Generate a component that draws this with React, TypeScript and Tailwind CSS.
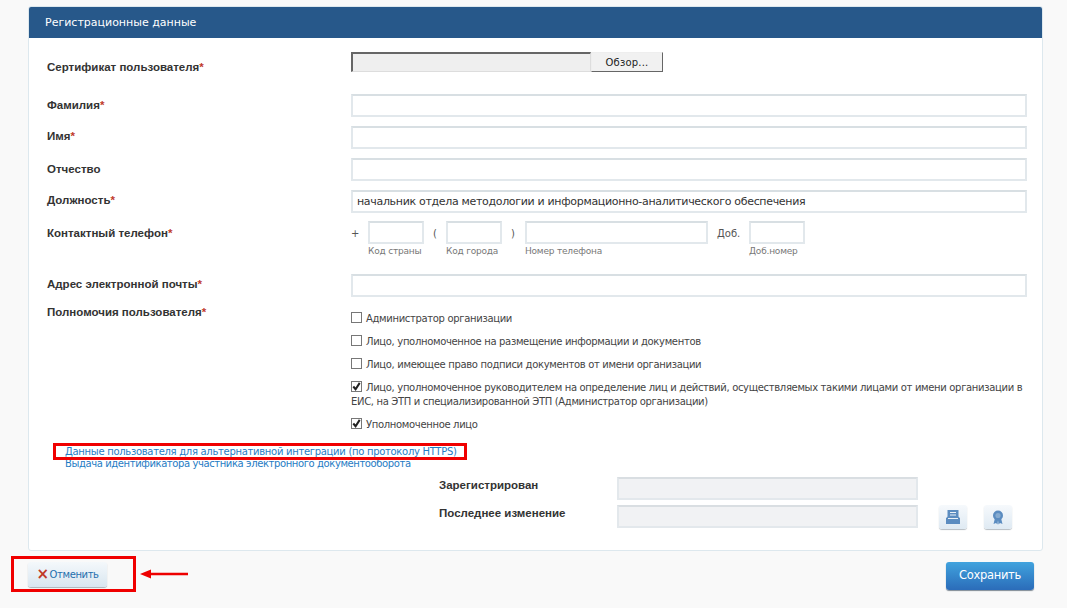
import React from 'react';

const Req = () => <span className="text-[#c0392b]">*</span>;

const TextField = ({ value = '' }: { value?: string }) => (
  <div className="h-[23px] w-full border-2 border-[#e2e8ec] border-t-[#d8dfe3] bg-white px-[4px] text-[11px] leading-[19px] tracking-[-0.32px] text-[#333]">{value}</div>
);

const Row = ({ label, className, labelClass, children }: { label: React.ReactNode; className: string; labelClass: string; children?: React.ReactNode }) => (
  <div className={`grid grid-cols-[304px_676px] ${className}`}>
    <div className={`font-['Liberation_Sans',sans-serif] text-[11.5px] font-bold leading-[14px] text-[#333] ${labelClass}`}>{label}</div>
    <div>{children}</div>
  </div>
);

const PhoneBox = ({ w, hint }: { w: string; hint: string }) => (
  <div className={w}>
    <div className="h-[23px] border-2 border-[#e2e8ec] border-t-[#d8dfe3] bg-white" />
    <div className="mt-[1px] whitespace-nowrap text-[9px] leading-[12px] tracking-[-0.2px] text-[#777]">{hint}</div>
  </div>
);

const Check = ({ checked, children, className }: { checked?: boolean; children: React.ReactNode; className: string }) => (
  <div className={`text-[10px] leading-[14px] tracking-[-0.33px] text-[#444] ${className}`}>
    <span className="relative mr-[4px] inline-block h-[11px] w-[11px] translate-y-[1px] border border-[#777] bg-white">
      {checked && (
        <svg viewBox="0 0 12 12" className="absolute -top-px -left-px h-[11px] w-[11px]">
          <path d="M2.500 6l2.500 3 4.500-7" fill="none" stroke="#222" strokeWidth="2.200" />
        </svg>
      )}
    </span>
    {children}
  </div>
);

const IconBtn = ({ children }: { children: React.ReactNode }) => (
  <div className="flex h-[24px] w-[28px] items-center justify-center rounded-[3px] bg-gradient-to-b from-[#f6f9fc] to-[#dfeaf3] shadow-[0_1px_1px_#b5bcc2]">
    {children}
  </div>
);

export default function App() {
  return (
    <div className="relative h-[608px] w-[1067px] overflow-hidden bg-[#f9f9f9] pt-[6px] font-['DejaVu_Sans',sans-serif]">
      <div className="mx-[28px] h-[545px] w-[1015px] overflow-hidden rounded-[3px] border border-[#dde8ee] bg-white">
        <div className="h-[31px] bg-[#27588a] pl-[16px] text-[11px] leading-[31px] text-white">Регистрационные данные</div>

        <div className="pl-[18px]">
          <Row label={<>Сертификат пользователя<Req /></>} className="h-[56px] pt-[14px]" labelClass="pt-[8px]">
            <div className="flex h-[20px]">
              <div className="h-[20px] w-[240px] border-t-2 border-r border-b border-l-2 border-t-[#666] border-r-[#ddd] border-b-[#ddd] border-l-[#666] bg-[#efefef]" />
              <div className="flex h-[20px] w-[72px] items-center justify-center border border-t-[#eee] border-r-[#666] border-b-[#666] border-l-[#eee] bg-[#f1f1f1] text-[10px] tracking-[0.2px] text-[#222]">Обзор...</div>
            </div>
          </Row>
          <Row label={<>Фамилия<Req /></>} className="h-[32px]" labelClass="pt-[4px]"><TextField /></Row>
          <Row label={<>Имя<Req /></>} className="h-[32px]" labelClass="pt-[3px]"><TextField /></Row>
          <Row label="Отчество" className="h-[32px]" labelClass="pt-[4px]"><TextField /></Row>
          <Row label={<>Должность<Req /></>} className="h-[31px]" labelClass="pt-[3px]">
            <TextField value="начальник отдела методологии и информационно-аналитического обеспечения" />
          </Row>
          <Row label={<>Контактный телефон<Req /></>} className="h-[54px]" labelClass="pt-[5px]">
            <div className="flex items-start text-[10px] leading-[25px] text-[#555]">
              <span className="w-[17px]">+</span>
              <PhoneBox w="w-[56px]" hint="Код страны" />
              <span className="ml-[9px] w-[13px]">(</span>
              <PhoneBox w="w-[56px]" hint="Код города" />
              <span className="ml-[9px] w-[14px]">)</span>
              <PhoneBox w="w-[183px]" hint="Номер телефона" />
              <span className="ml-[9px] w-[32px]">Доб.</span>
              <PhoneBox w="w-[56px]" hint="Доб.номер" />
            </div>
          </Row>
          <Row label={<>Адрес электронной почты<Req /></>} className="-mt-[1px] h-[30px]" labelClass="pt-[3px]"><TextField /></Row>
          <Row label={<>Полномочия пользователя<Req /></>} className="h-[142px]" labelClass="pt-[1px]">
            <Check className="pt-[7px]">Администратор организации</Check>
            <Check className="mt-[8px]">Лицо, уполномоченное на размещение информации и документов</Check>
            <Check className="mt-[8px]">Лицо, имеющее право подписи документов от имени организации</Check>
            <Check checked className="mt-[8px]">
              Лицо, уполномоченное руководителем на определение лиц и действий, осуществляемых такими лицами от имени организации в ЕИС, на ЭТП и специализированной ЭТП (Администратор организации)
            </Check>
            <Check checked className="mt-[8px]">Уполномоченное лицо</Check>
          </Row>

          <div className="pl-[18px] text-[10px] leading-[12px] tracking-[-0.3px] text-[#1f7cc4]">
            <div>Данные пользователя для альтернативной интеграции (по протоколу HTTPS)</div>
            <div className="tracking-[-0.4px]">Выдача идентификатора участника электронного документооборота</div>
          </div>

          <div className="mt-[7px] ml-[392px] w-[578px]">
            <div className="flex h-[28px] items-start">
              <div className="w-[178px] pt-[1px] font-['Liberation_Sans',sans-serif] text-[11.5px] leading-[14px] font-bold text-[#333]">Зарегистрирован</div>
              <div className="h-[23px] w-[301px] border-2 border-[#e3e8ec] border-t-[#d9dee2] bg-[#f1f2f4]" />
            </div>
            <div className="flex h-[28px] items-start">
              <div className="w-[178px] pt-[1px] font-['Liberation_Sans',sans-serif] text-[11.5px] leading-[14px] font-bold text-[#333]">Последнее изменение</div>
              <div className="h-[23px] w-[301px] border-2 border-[#e3e8ec] border-t-[#d9dee2] bg-[#f1f2f4]" />
              <div className="ml-[21px] flex gap-[17px]">
                <IconBtn>
                  <svg viewBox="0 0 16 16" className="h-[16px] w-[16px]" fill="#5b8cc0">
                    <path d="M2.500 1h11v8h-11z" />
                    <path d="M3 7.500v2.500h10V7.500l2 1.500v6H1V9z" />
                    <path d="M5 3.500h6M5 6h6" stroke="#eaf1f8" strokeWidth="1" />
                  </svg>
                </IconBtn>
                <IconBtn>
                  <svg viewBox="0 0 16 16" className="h-[16px] w-[16px]">
                    <path d="M5 9l-1.500 6 2.500-1 1.500 1.500L8 11l.5 4.500L10 14l2.500 1L11 9z" fill="#5b8cc0" />
                    <circle cx="8" cy="6.500" r="5" fill="#5b8cc0" />
                    <circle cx="8" cy="6.500" r="2.600" fill="#86abd0" />
                  </svg>
                </IconBtn>
              </div>
            </div>
          </div>
        </div>
      </div>

      <div className="mt-[11px] flex items-start justify-between pr-[33px] pl-[28px]">
        <div className="flex h-[25px] w-[79px] items-center justify-center rounded-[3px] bg-gradient-to-b from-[#f4f8fb] to-[#d9e6f0] text-[10px] tracking-[-0.4px] text-[#1f6fae] shadow-[0_1px_1px_#aab2b8]">
          <span className="mr-[1px] text-[15px] leading-none font-bold text-[#c0392b]">×</span>Отменить
        </div>
        <div className="flex h-[28px] w-[88px] items-center justify-center rounded-[3px] bg-gradient-to-b from-[#41a3de] to-[#2b6cb9] text-[11.5px] tracking-[-0.3px] text-white shadow-[0_1px_1px_#7f8a94]">
          Сохранить
        </div>
      </div>

      {/* red annotations drawn over the screenshot */}
      <div className="absolute top-[443px] left-[53px] h-[17px] w-[414px] border-[3px] border-[#f00000]" />
      <div className="absolute top-[556px] left-[11px] h-[36px] w-[125px] border-[3px] border-[#f00000]" />
      <svg className="absolute top-[568px] left-[139px] h-[12px] w-[50px]" viewBox="0 0 50 12">
        <path d="M1 6l11-4.500v3.300h37v2.400H12v3.300z" fill="#ee0000" />
      </svg>
    </div>
  );
}
